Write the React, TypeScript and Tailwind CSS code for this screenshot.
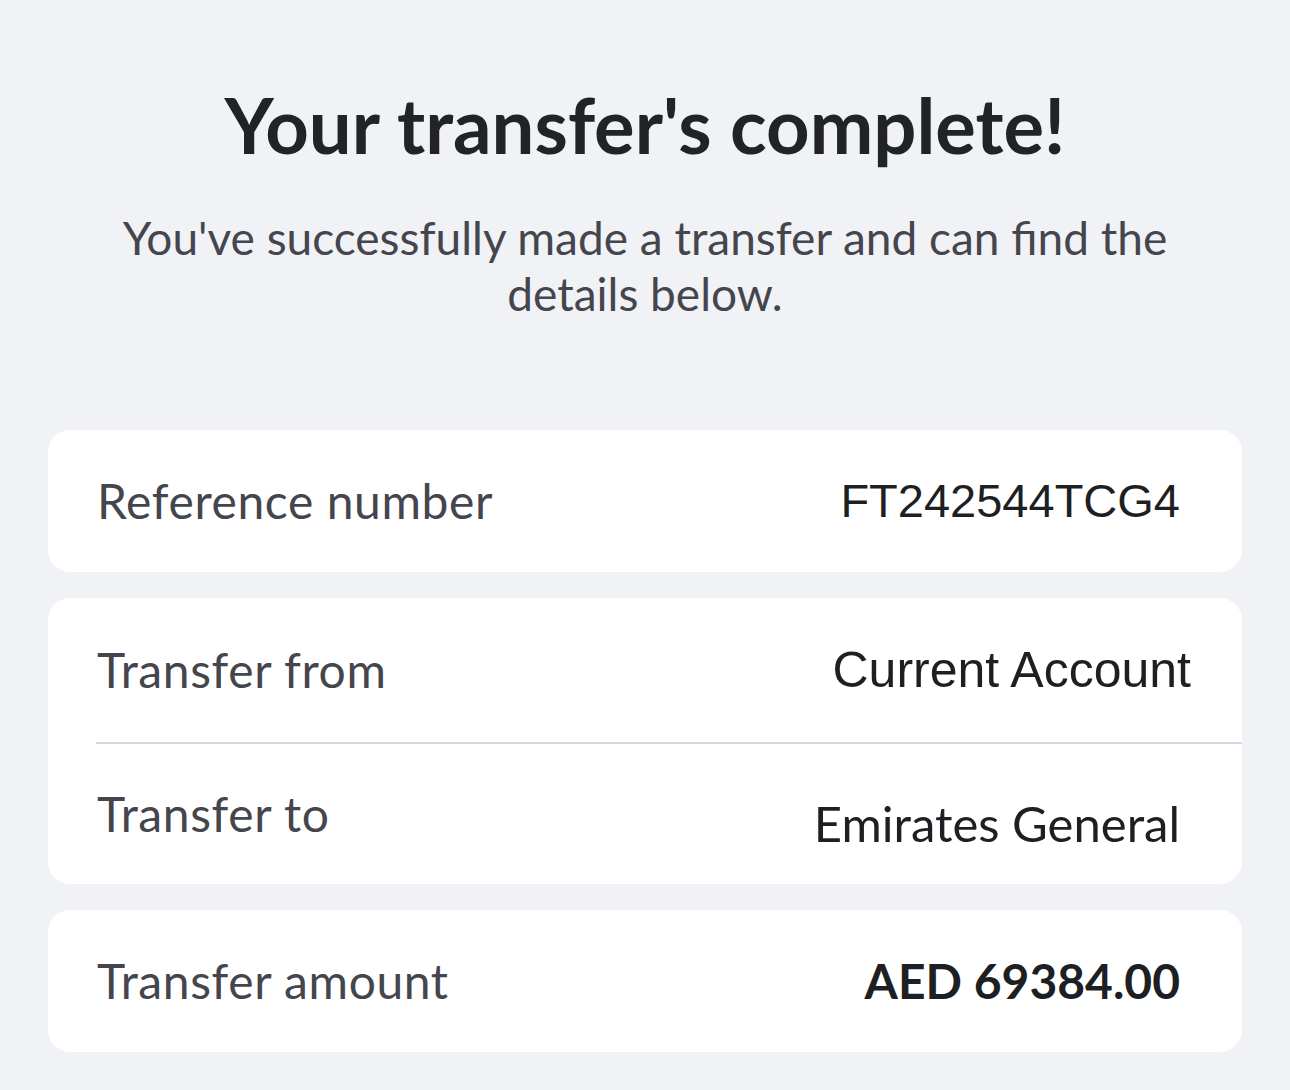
import React from 'react';

const Row: React.FC<{ label: string; value: string; valueClass?: string }> = ({ label, value, valueClass = '' }) => (
  <div className="flex items-center justify-between h-[142px]">
    <span className="text-[48px] tracking-[0.6px] text-[#44454d]">{label}</span>
    <span className={`text-[#1e1f22] ${valueClass}`}>{value}</span>
  </div>
);

const App: React.FC = () => {
  return (
    <div className="min-h-screen w-full bg-[#f1f2f6] px-[48px] pt-[80px] pb-[38px] font-['Lato',sans-serif]">
      <h1 className="text-center text-[76px] leading-[90px] font-bold text-[#222326]">
        Your transfer's complete!
      </h1>
      <p className="mx-auto mt-[40px] max-w-[1100px] text-center text-[46px] leading-[56px] text-[#45464d]">
        You've successfully made a transfer and can find the details below.
      </p>

      <div className="mt-[108px] flex flex-col gap-[26px]">
        <div className="rounded-[22px] bg-white pl-[49px] pr-[62px]">
          <Row
            label="Reference number"
            value="FT242544TCG4"
            valueClass="text-[47px] font-['Liberation_Sans',Arial,sans-serif]"
          />
        </div>

        <div className="rounded-[22px] bg-white">
          <div className="flex items-center justify-between h-[144px] pl-[49px] pr-[51px]">
            <span className="text-[48px] tracking-[0.6px] text-[#44454d]">Transfer from</span>
            <span className="text-[50px] text-[#1e1f22] font-['Liberation_Sans',Arial,sans-serif]">
              Current Account
            </span>
          </div>
          <div className="ml-[48px] h-[2px] bg-[#d5d7dc]" />
          <div className="flex items-center justify-between h-[140px] pl-[49px] pr-[62px]">
            <span className="text-[48px] tracking-[0.6px] text-[#44454d]">Transfer to</span>
            <span className="text-[49px] text-[#1e1f22] mt-[20px]">Emirates General</span>
          </div>
        </div>

        <div className="rounded-[22px] bg-white pl-[49px] pr-[62px]">
          <Row label="Transfer amount" value="AED 69384.00" valueClass="text-[48px] font-bold" />
        </div>
      </div>
    </div>
  );
};

export default App;
